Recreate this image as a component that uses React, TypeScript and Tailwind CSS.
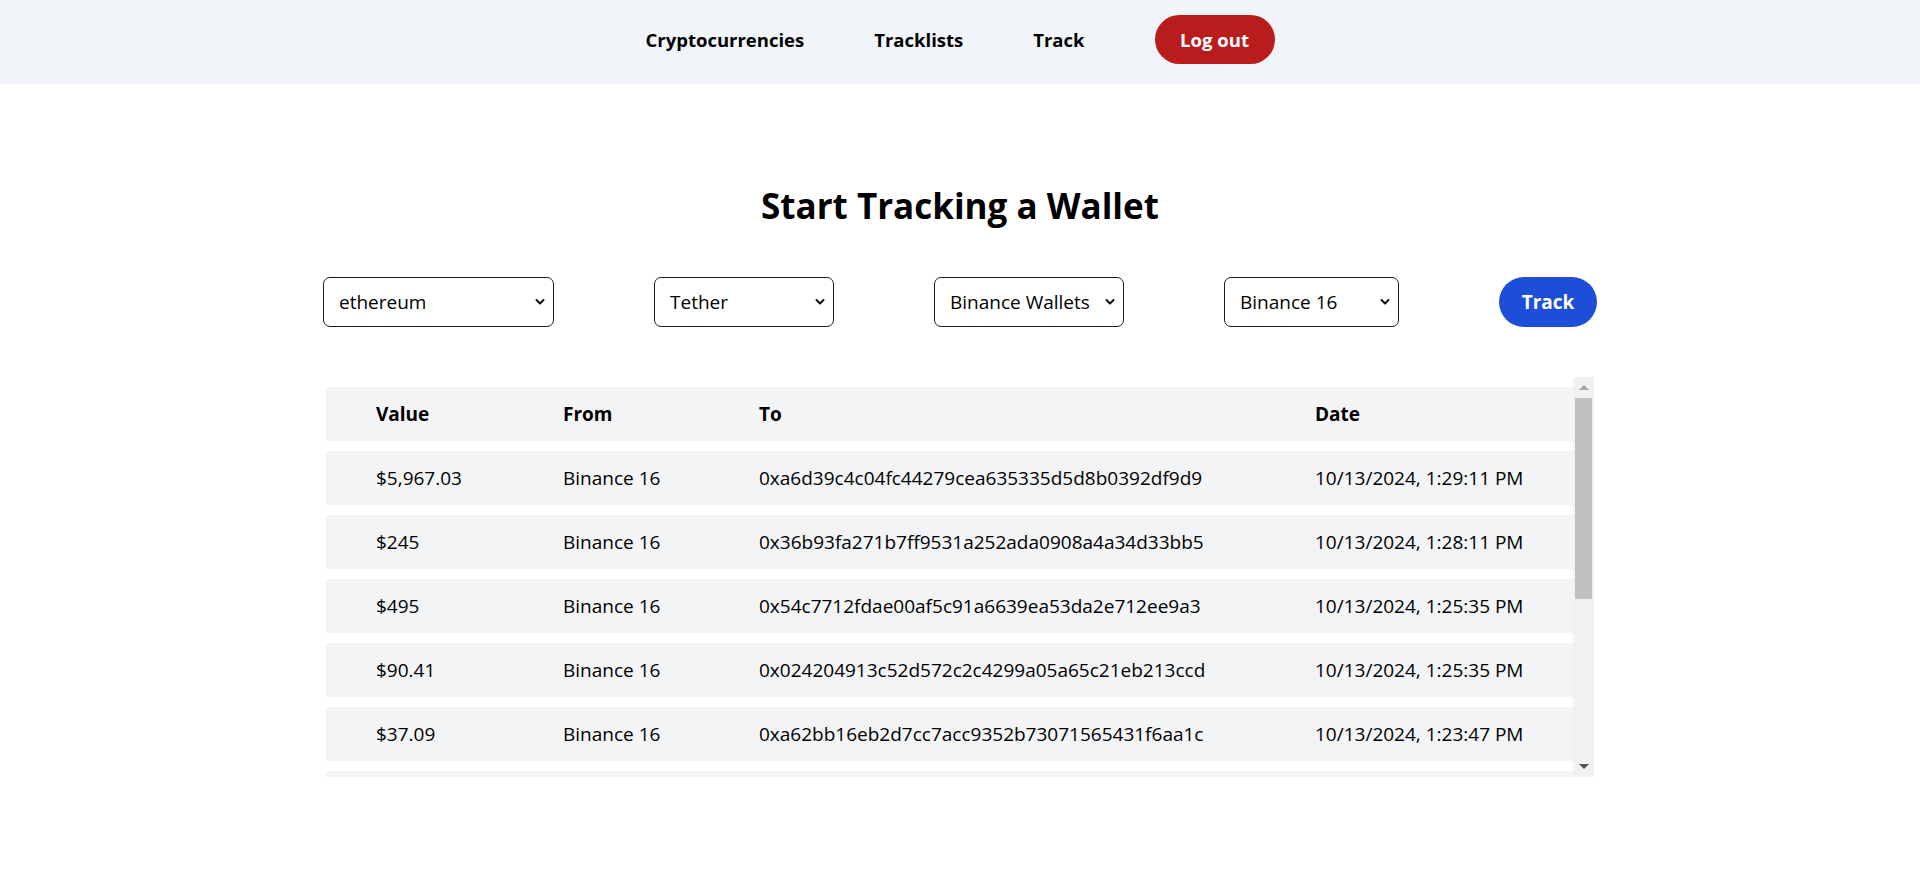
import React from 'react';

interface Transfer {
    value: string;
    from: string;
    to: string;
    date: string;
}

const transfers: Transfer[] = [
    { value: '$5,967.03', from: 'Binance 16', to: '0xa6d39c4c04fc44279cea635335d5d8b0392df9d9', date: '10/13/2024, 1:29:11 PM' },
    { value: '$245', from: 'Binance 16', to: '0x36b93fa271b7ff9531a252ada0908a4a34d33bb5', date: '10/13/2024, 1:28:11 PM' },
    { value: '$495', from: 'Binance 16', to: '0x54c7712fdae00af5c91a6639ea53da2e712ee9a3', date: '10/13/2024, 1:25:35 PM' },
    { value: '$90.41', from: 'Binance 16', to: '0x024204913c52d572c2c4299a05a65c21eb213ccd', date: '10/13/2024, 1:25:35 PM' },
    { value: '$37.09', from: 'Binance 16', to: '0xa62bb16eb2d7cc7acc9352b73071565431f6aa1c', date: '10/13/2024, 1:23:47 PM' },
    { value: '$1,200', from: 'Binance 16', to: '0x3f5ce5fbfe3e9af3971dd833d26ba9b5c936f0be', date: '10/13/2024, 1:21:02 PM' },
    { value: '$64.5', from: 'Binance 16', to: '0x9696f59e4d72e237be84ffd425dcad154bf96976', date: '10/13/2024, 1:19:40 PM' },
];

const Chevron = () => (
    <svg className="pointer-events-none absolute right-[9px] top-1/2 -translate-y-1/2" width="10" height="7" viewBox="0 0 10 7" fill="none">
        <path d="M1.5 1.5 L5 5 L8.5 1.5" stroke="#111" strokeWidth="2" strokeLinecap="round" strokeLinejoin="round" />
    </svg>
);

function Select({ value, options, width }: { value: string; options: string[]; width: string }) {
    return (
        <div className={`relative h-[50px] ${width}`}>
            <select
                defaultValue={value}
                className="h-full w-full appearance-none rounded-[7px] border border-[#1a1a1a] bg-white pl-[15px] pr-8 text-[19px] text-black outline-none"
            >
                {options.map(o => (
                    <option key={o}>{o}</option>
                ))}
            </select>
            <Chevron />
        </div>
    );
}

function ScrollBar() {
    return (
        <div className="flex w-[21px] flex-col bg-[#f1f1f1]">
            <div className="flex h-[21px] items-center justify-center">
                <div className="h-0 w-0 border-x-[5px] border-b-[5px] border-x-transparent border-b-[#a3a3a3]" />
            </div>
            <div className="mx-[2px] h-[201px] bg-[#c1c1c1]" />
            <div className="flex-1" />
            <div className="flex h-[21px] items-center justify-center">
                <div className="h-0 w-0 border-x-[5px] border-t-[5px] border-x-transparent border-t-[#505050]" />
            </div>
        </div>
    );
}

function App() {
    return (
        <div className="min-h-screen bg-white font-['Open_Sans','Noto_Sans',sans-serif] text-black">
            <nav className="flex items-center justify-center gap-[70px] bg-[#f1f5f9] pt-[15px] pb-[20px]">
                <a className="text-[18.5px] font-bold">Cryptocurrencies</a>
                <a className="text-[18.5px] font-bold">Tracklists</a>
                <a className="text-[18.5px] font-bold">Track</a>
                <button className="h-[49px] w-[120px] rounded-full bg-[#b91c1c] text-[18.5px] font-bold text-white">Log out</button>
            </nav>

            <main className="flex flex-col items-center pt-[97px]">
                <h1 className="text-[35px] leading-[50px] font-bold">Start Tracking a Wallet</h1>

                <div className="mt-[46px] flex items-center gap-[100px]">
                    <Select value="ethereum" options={['ethereum', 'bitcoin', 'solana']} width="w-[231px]" />
                    <Select value="Tether" options={['Tether', 'USD Coin', 'Ether']} width="w-[180px]" />
                    <Select value="Binance Wallets" options={['Binance Wallets', 'Coinbase Wallets']} width="w-[190px]" />
                    <Select value="Binance 16" options={['Binance 16', 'Binance 14', 'Binance 15']} width="w-[175px]" />
                    <button className="h-[50px] w-[98px] rounded-full bg-[#1d4ed8] text-[19px] font-bold text-white">Track</button>
                </div>

                <div className="mt-[50px] flex h-[400px] w-[1268px]">
                    <div className="flex-1 overflow-hidden">
                        <table className="w-full table-fixed border-separate border-spacing-x-0 border-spacing-y-[10px] text-left text-[19px]">
                            <colgroup>
                                <col className="w-[187px]" />
                                <col className="w-[196px]" />
                                <col className="w-[556px]" />
                                <col />
                            </colgroup>
                            <thead>
                                <tr className="bg-[#f3f4f6]">
                                    <th className="py-[15px] pl-[50px] leading-[24px] font-bold">Value</th>
                                    <th className="py-[15px] pl-[50px] leading-[24px] font-bold">From</th>
                                    <th className="py-[15px] pl-[50px] leading-[24px] font-bold">To</th>
                                    <th className="py-[15px] pl-[50px] leading-[24px] font-bold">Date</th>
                                </tr>
                            </thead>
                            <tbody>
                                {transfers.map((t, i) => (
                                    <tr key={i} className="bg-[#f3f4f6]">
                                        <td className="py-[15px] pl-[50px] leading-[24px]">{t.value}</td>
                                        <td className="py-[15px] pl-[50px] leading-[24px]">{t.from}</td>
                                        <td className="py-[15px] pl-[50px] leading-[24px]">{t.to}</td>
                                        <td className="py-[15px] pl-[50px] leading-[24px]">{t.date}</td>
                                    </tr>
                                ))}
                            </tbody>
                        </table>
                    </div>
                    <ScrollBar />
                </div>
            </main>
        </div>
    );
}

export default App;
